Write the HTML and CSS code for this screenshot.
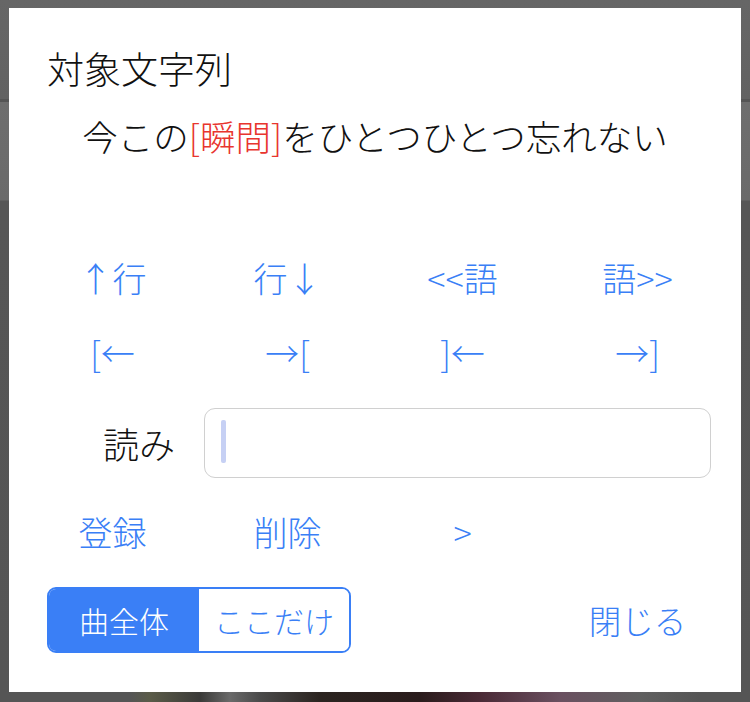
FILE: index.html
```html
<!DOCTYPE html>
<html lang="ja">
<head>
<meta charset="utf-8">
<title>対象文字列</title>
<link rel="stylesheet" href="styles.css">
</head>
<body>
<div class="backdrop">
  <div class="dialog">
    <div class="title">対象文字列</div>
    <div class="sentence">今この<span class="hl">[瞬間]</span>をひとつひとつ忘れない</div>
    <div class="grid nav">
      <button class="link">↑行</button>
      <button class="link">行↓</button>
      <button class="link">&lt;&lt;語</button>
      <button class="link">語&gt;&gt;</button>
      <button class="link">[←</button>
      <button class="link">→[</button>
      <button class="link">]←</button>
      <button class="link">→]</button>
    </div>
    <div class="reading">
      <div class="label">読み</div>
      <div class="input"><span class="caret"></span></div>
    </div>
    <div class="grid actions">
      <button class="link">登録</button>
      <button class="link">削除</button>
      <button class="link">&gt;</button>
      <span></span>
    </div>
    <div class="footer">
      <div class="segment">
        <button class="seg active">曲全体</button>
        <button class="seg">ここだけ</button>
      </div>
      <button class="link close">閉じる</button>
    </div>
  </div>
</div>
</body>
</html>
```
FILE: styles.css
```css
* { box-sizing: border-box; }
html, body {
  margin: 0;
  padding: 0;
  width: 750px;
  height: 702px;
  overflow: hidden;
}
body {
  font-family: "Noto Sans CJK JP", "Noto Sans", sans-serif;
  font-weight: 300;
  background:
    linear-gradient(to bottom, #666666 0, #626262 99px, #555555 99px, #555555 102px, #6e6e6e 102px, #6a6a6a 200px, #565656 201px, #555555 100%);
}
.backdrop {
  padding: 8px 9px 10px 9px;
  height: 702px;
  background:
    linear-gradient(to right, transparent 0, transparent 130px, #5a5b48 150px, #3a3a38 200px, #6a6a6a 230px, #4a4a4a 260px, #2b2420 320px, #2a1c1c 420px, #4a2a36 480px, #6a5060 560px, #606060 640px, transparent 700px) bottom / 100% 10px no-repeat;
}
.dialog {
  width: 732px;
  height: 684px;
  background: #ffffff;
  padding: 38px 16px 0 16px;
  display: flex;
  flex-direction: column;
}
.title {
  font-size: 37px;
  line-height: 44px;
  height: 44px;
  color: #111;
  padding-left: 22px;
}
.sentence {
  margin-top: 24px;
  font-size: 35.5px;
  line-height: 44px;
  height: 44px;
  color: #111;
  text-align: center;
}
.hl { color: #e8352e; }
.grid {
  display: grid;
  grid-template-columns: repeat(4, 1fr);
  grid-auto-rows: 75px;
}
.nav { margin-top: 82px; }
.link {
  font-family: inherit;
  font-weight: inherit;
  background: none;
  border: 0;
  padding: 0;
  margin: 0;
  color: #3a7ff6;
  font-size: 34px;
  line-height: 75px;
  text-align: center;
  cursor: pointer;
}
.reading {
  margin-top: 18px;
  display: flex;
  align-items: center;
  height: 70px;
}
.label {
  width: 179px;
  padding-right: 29px;
  text-align: right;
  font-size: 36px;
  color: #111;
}
.input {
  width: 507px;
  height: 70px;
  border: 1.5px solid #d0d0d0;
  border-radius: 11px;
  padding: 11px 0 0 16px;
}
.caret {
  display: block;
  width: 5px;
  height: 43px;
  border-radius: 2px;
  background: #c6d0f4;
}
.actions { margin-top: 16px; }
.footer {
  margin-top: 18px;
  display: flex;
  justify-content: space-between;
  align-items: center;
  padding-left: 22px;
}
.segment {
  display: flex;
  width: 304px;
  height: 66px;
  border: 2px solid #3a7ff6;
  border-radius: 9px;
  overflow: hidden;
}
.seg {
  flex: 1;
  font-family: inherit;
  font-weight: inherit;
  font-size: 30px;
  border: 0;
  margin: 0;
  padding: 0;
  background: #fff;
  color: #3a7ff6;
}
.seg.active {
  background: #3a7ff6;
  color: #fff;
}
.close {
  width: 175px;
  font-size: 32.5px;
  line-height: 66px;
}
```
